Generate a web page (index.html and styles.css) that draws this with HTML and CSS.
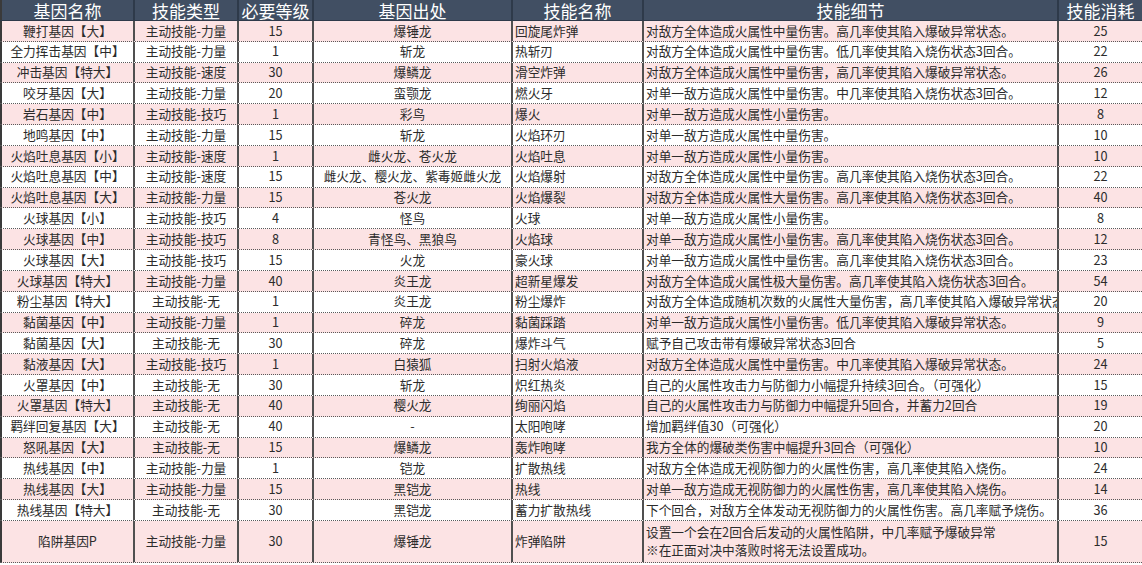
FILE: index.html
```html
<!DOCTYPE html>
<html lang="zh-CN">
<head>
<meta charset="utf-8">
<title>基因技能表</title>
<link rel="stylesheet" href="styles.css">
</head>
<body>
<div class="sheet">
  <div class="row head">
    <div class="c c1">基因名称</div><div class="c c2">技能类型</div><div class="c c3">必要等级</div><div class="c c4">基因出处</div><div class="c c5 hc">技能名称</div><div class="c c6 hc">技能细节</div><div class="c c7">技能消耗</div>
  </div>
  <div class="row pink"><div class="c c1">鞭打基因【大】</div><div class="c c2">主动技能-力量</div><div class="c c3">15</div><div class="c c4">爆锤龙</div><div class="c c5">回旋尾炸弹</div><div class="c c6">对敌方全体造成火属性中量伤害。高几率使其陷入爆破异常状态。</div><div class="c c7">25</div></div>
  <div class="row"><div class="c c1">全力挥击基因【中】</div><div class="c c2">主动技能-力量</div><div class="c c3">1</div><div class="c c4">斩龙</div><div class="c c5">热斩刃</div><div class="c c6">对敌方全体造成火属性中量伤害。低几率使其陷入烧伤状态3回合。</div><div class="c c7">22</div></div>
  <div class="row pink"><div class="c c1">冲击基因【特大】</div><div class="c c2">主动技能-速度</div><div class="c c3">30</div><div class="c c4">爆鳞龙</div><div class="c c5">滑空炸弹</div><div class="c c6">对敌方全体造成火属性中量伤害，高几率使其陷入爆破异常状态。</div><div class="c c7">26</div></div>
  <div class="row"><div class="c c1">咬牙基因【大】</div><div class="c c2">主动技能-力量</div><div class="c c3">20</div><div class="c c4">蛮颚龙</div><div class="c c5">燃火牙</div><div class="c c6">对单一敌方造成火属性中量伤害。中几率使其陷入烧伤状态3回合。</div><div class="c c7">12</div></div>
  <div class="row pink"><div class="c c1">岩石基因【中】</div><div class="c c2">主动技能-技巧</div><div class="c c3">1</div><div class="c c4">彩鸟</div><div class="c c5">爆火</div><div class="c c6">对单一敌方造成火属性小量伤害。</div><div class="c c7">8</div></div>
  <div class="row"><div class="c c1">地鸣基因【中】</div><div class="c c2">主动技能-力量</div><div class="c c3">15</div><div class="c c4">斩龙</div><div class="c c5">火焰环刃</div><div class="c c6">对单一敌方造成火属性中量伤害。</div><div class="c c7">10</div></div>
  <div class="row pink"><div class="c c1">火焰吐息基因【小】</div><div class="c c2">主动技能-速度</div><div class="c c3">1</div><div class="c c4">雌火龙、苍火龙</div><div class="c c5">火焰吐息</div><div class="c c6">对单一敌方造成火属性小量伤害。</div><div class="c c7">10</div></div>
  <div class="row"><div class="c c1">火焰吐息基因【中】</div><div class="c c2">主动技能-速度</div><div class="c c3">15</div><div class="c c4">雌火龙、樱火龙、紫毒姬雌火龙</div><div class="c c5">火焰爆射</div><div class="c c6">对敌方全体造成火属性中量伤害。高几率使其陷入烧伤状态3回合。</div><div class="c c7">22</div></div>
  <div class="row pink"><div class="c c1">火焰吐息基因【大】</div><div class="c c2">主动技能-力量</div><div class="c c3">15</div><div class="c c4">苍火龙</div><div class="c c5">火焰爆裂</div><div class="c c6">对敌方全体造成火属性大量伤害。高几率使其陷入烧伤状态3回合。</div><div class="c c7">40</div></div>
  <div class="row"><div class="c c1">火球基因【小】</div><div class="c c2">主动技能-技巧</div><div class="c c3">4</div><div class="c c4">怪鸟</div><div class="c c5">火球</div><div class="c c6">对单一敌方造成火属性小量伤害。</div><div class="c c7">8</div></div>
  <div class="row pink"><div class="c c1">火球基因【中】</div><div class="c c2">主动技能-技巧</div><div class="c c3">8</div><div class="c c4">青怪鸟、黑狼鸟</div><div class="c c5">火焰球</div><div class="c c6">对单一敌方造成火属性小量伤害。高几率使其陷入烧伤状态3回合。</div><div class="c c7">12</div></div>
  <div class="row"><div class="c c1">火球基因【大】</div><div class="c c2">主动技能-技巧</div><div class="c c3">15</div><div class="c c4">火龙</div><div class="c c5">豪火球</div><div class="c c6">对单一敌方造成火属性中量伤害。高几率使其陷入烧伤状态3回合。</div><div class="c c7">23</div></div>
  <div class="row pink"><div class="c c1">火球基因【特大】</div><div class="c c2">主动技能-力量</div><div class="c c3">40</div><div class="c c4">炎王龙</div><div class="c c5">超新星爆发</div><div class="c c6">对敌方全体造成火属性极大量伤害。高几率使其陷入烧伤状态3回合。</div><div class="c c7">54</div></div>
  <div class="row"><div class="c c1">粉尘基因【特大】</div><div class="c c2">主动技能-无</div><div class="c c3">1</div><div class="c c4">炎王龙</div><div class="c c5">粉尘爆炸</div><div class="c c6">对敌方全体造成随机次数的火属性大量伤害，高几率使其陷入爆破异常状态。</div><div class="c c7">20</div></div>
  <div class="row pink"><div class="c c1">黏菌基因【中】</div><div class="c c2">主动技能-力量</div><div class="c c3">1</div><div class="c c4">碎龙</div><div class="c c5">黏菌踩踏</div><div class="c c6">对单一敌方造成火属性小量伤害。低几率使其陷入爆破异常状态。</div><div class="c c7">9</div></div>
  <div class="row"><div class="c c1">黏菌基因【大】</div><div class="c c2">主动技能-无</div><div class="c c3">30</div><div class="c c4">碎龙</div><div class="c c5">爆炸斗气</div><div class="c c6">赋予自己攻击带有爆破异常状态3回合</div><div class="c c7">5</div></div>
  <div class="row pink"><div class="c c1">黏液基因【大】</div><div class="c c2">主动技能-技巧</div><div class="c c3">1</div><div class="c c4">白猿狐</div><div class="c c5">扫射火焰液</div><div class="c c6">对敌方全体造成火属性中量伤害。中几率使其陷入爆破异常状态。</div><div class="c c7">24</div></div>
  <div class="row"><div class="c c1">火罩基因【中】</div><div class="c c2">主动技能-无</div><div class="c c3">30</div><div class="c c4">斩龙</div><div class="c c5">炽红热炎</div><div class="c c6">自己的火属性攻击力与防御力小幅提升持续3回合。（可强化）</div><div class="c c7">15</div></div>
  <div class="row pink"><div class="c c1">火罩基因【特大】</div><div class="c c2">主动技能-无</div><div class="c c3">40</div><div class="c c4">樱火龙</div><div class="c c5">绚丽闪焰</div><div class="c c6">自己的火属性攻击力与防御力中幅提升5回合，并蓄力2回合</div><div class="c c7">19</div></div>
  <div class="row"><div class="c c1">羁绊回复基因【大】</div><div class="c c2">主动技能-无</div><div class="c c3">40</div><div class="c c4">-</div><div class="c c5">太阳咆哮</div><div class="c c6">增加羁绊值30（可强化）</div><div class="c c7">20</div></div>
  <div class="row pink"><div class="c c1">怒吼基因【大】</div><div class="c c2">主动技能-无</div><div class="c c3">15</div><div class="c c4">爆鳞龙</div><div class="c c5">轰炸咆哮</div><div class="c c6">我方全体的爆破类伤害中幅提升3回合（可强化）</div><div class="c c7">10</div></div>
  <div class="row"><div class="c c1">热线基因【中】</div><div class="c c2">主动技能-力量</div><div class="c c3">1</div><div class="c c4">铠龙</div><div class="c c5">扩散热线</div><div class="c c6">对敌方全体造成无视防御力的火属性伤害，高几率使其陷入烧伤。</div><div class="c c7">24</div></div>
  <div class="row pink"><div class="c c1">热线基因【大】</div><div class="c c2">主动技能-力量</div><div class="c c3">15</div><div class="c c4">黑铠龙</div><div class="c c5">热线</div><div class="c c6">对单一敌方造成无视防御力的火属性伤害，高几率使其陷入烧伤。</div><div class="c c7">14</div></div>
  <div class="row"><div class="c c1">热线基因【特大】</div><div class="c c2">主动技能-无</div><div class="c c3">30</div><div class="c c4">黑铠龙</div><div class="c c5">蓄力扩散热线</div><div class="c c6">下个回合，对敌方全体发动无视防御力的火属性伤害。高几率赋予烧伤。</div><div class="c c7">36</div></div>
  <div class="row pink tall"><div class="c c1">陷阱基因P</div><div class="c c2">主动技能-力量</div><div class="c c3">30</div><div class="c c4">爆锤龙</div><div class="c c5">炸弹陷阱</div><div class="c c6 multi"><span>设置一个会在2回合后发动的火属性陷阱，中几率赋予爆破异常</span><span>※在正面对决中落败时将无法设置成功。</span></div><div class="c c7">15</div></div>
</div>
</body>
</html>
```

FILE: styles.css
```css
html, body {
  margin: 0;
  padding: 0;
  background: #ffffff;
}

.sheet {
  width: 1142px;
  display: flex;
  flex-direction: column;
  font-family: "Noto Sans CJK SC", "Noto Sans", sans-serif;
  font-size: 12.7px;
  color: #2b2b2b;
}

.row {
  display: grid;
  grid-template-columns: 135px 104px 75px 199px 131px 415px 83px;
  height: 20.83px;
  box-sizing: border-box;
  border-bottom: 1px dotted #5a5a5a;
  background: #ffffff;
}

.row.pink {
  background: #fce3e4;
}

.row.head {
  height: 21px;
  background: #414f63;
  color: #ffffff;
  font-size: 17px;
  border-bottom: 1px solid #2e3a4a;
}

.row.tall {
  height: 42px;
}

.c {
  display: flex;
  align-items: center;
  justify-content: center;
  white-space: nowrap;
  overflow: hidden;
  box-sizing: border-box;
  border-right: 2px solid #505050;
  line-height: 1;
}

.head .c {
  overflow: visible;
  line-height: 1;
  border-right-color: #2e3a4a;
}

.c1 {
  border-left: 2px solid #3a3a3a;
}

.c5, .c6 {
  justify-content: flex-start;
  padding-left: 2px;
}

.head .hc {
  justify-content: center;
  padding-left: 0;
}

.c7 {
  border-right: none;
}

.multi {
  flex-direction: column;
  align-items: flex-start;
  justify-content: center;
  gap: 5px;
}
```
